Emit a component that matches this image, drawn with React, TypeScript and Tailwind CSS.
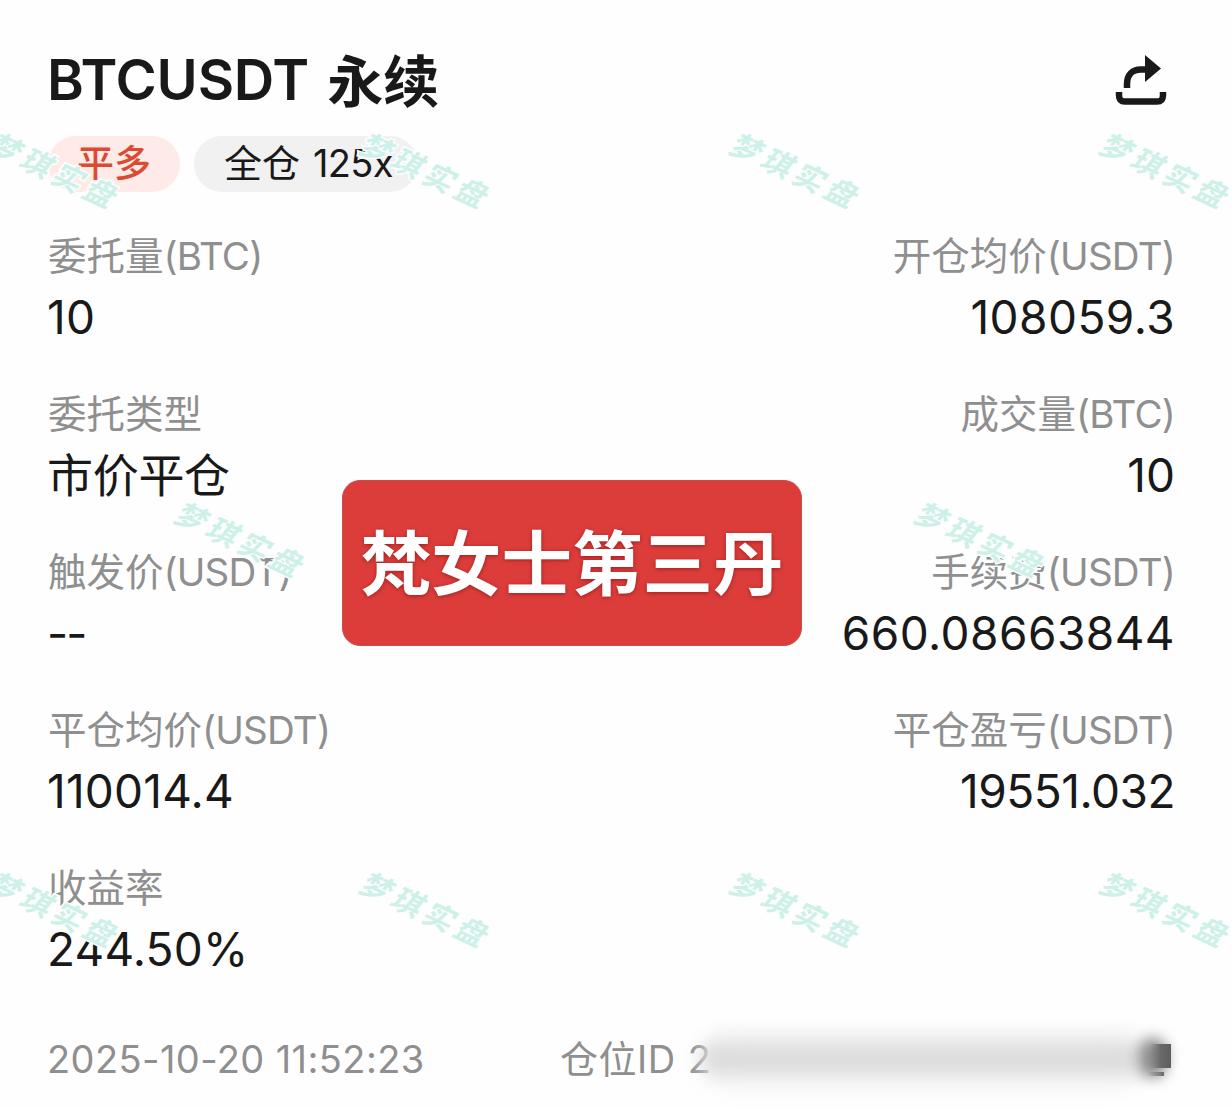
type Field = {
  label: string;
  unit?: string;
  value: string;
  tracking: string;
};

const rows: Field[][] = [
  [
    { label: '委托量', unit: '(BTC)', value: '10', tracking: 'tracking-[0.300px]' },
    { label: '开仓均价', unit: '(USDT)', value: '108059.3', tracking: 'tracking-[0.450px]' },
  ],
  [
    { label: '委托类型', value: '市价平仓', tracking: 'tracking-[-0.300px]' },
    { label: '成交量', unit: '(BTC)', value: '10', tracking: 'tracking-[0px]' },
  ],
  [
    { label: '触发价', unit: '(USDT)', value: '--', tracking: 'tracking-[-2px]' },
    { label: '手续费', unit: '(USDT)', value: '660.08663844', tracking: 'tracking-[0.450px]' },
  ],
  [
    { label: '平仓均价', unit: '(USDT)', value: '110014.4', tracking: 'tracking-[0.200px]' },
    { label: '平仓盈亏', unit: '(USDT)', value: '19551.032', tracking: 'tracking-[-0.500px]' },
  ],
  [{ label: '收益率', value: '244.50%', tracking: 'tracking-[0.200px]' }],
];

const watermarks = [
  'left-[51px] top-[170px]',
  'left-[422px] top-[170px]',
  'left-[792px] top-[170px]',
  'left-[1162px] top-[170px]',
  'left-[237px] top-[539px]',
  'left-[977px] top-[539px]',
  'left-[51px] top-[909px]',
  'left-[422px] top-[909px]',
  'left-[792px] top-[909px]',
  'left-[1162px] top-[909px]',
];

function ShareIcon() {
  return (
    <svg className="mt-[15px] h-[52px] w-[52px]" viewBox="0 0 52 52" fill="none">
      <path d="M12 33v-4c0-9 5-14.500 14-14.500h6" stroke="#191919" strokeWidth="6.500" />
      <path d="M30 0l16 13.500-16 13.500z" fill="#191919" />
      <path d="M4 37v3c0 4.500 2 6.500 6 6.500h32c4 0 6-2 6-6.500v-3" stroke="#191919" strokeWidth="6.500" />
    </svg>
  );
}

function FieldCell({ field, right }: { field: Field; right: boolean }) {
  return (
    <div className={right ? 'text-right' : 'pl-px text-left'}>
      <div className="h-[60px] text-[38.500px] leading-[61px] text-[#8f8f8f]">
        {field.label}
        {field.unit && <span className="tracking-[-0.800px]">{field.unit}</span>}
      </div>
      <div className={`-ml-px h-[62px] text-[46px] leading-[62px] text-[#191919] ${field.tracking}`}>{field.value}</div>
    </div>
  );
}

export default function App() {
  return (
    <div className="relative h-[1108px] w-[1232px] overflow-hidden whitespace-nowrap bg-[#fefefe] font-[Inter,'Noto_Sans_CJK_SC',sans-serif]">
      <div className="flex h-full flex-col pl-[47px] pr-[57px] pt-10">
        <header className="flex h-20 justify-between">
          <h1 className="flex text-[56px] font-semibold leading-[80px] text-[#191919]">
            <span className="tracking-[-0.200px]">BTCUSDT</span>
            <span className="ml-[18px] pt-0.5 leading-[80px]">永续</span>
          </h1>
          <div className="mr-2">
            <ShareIcon />
          </div>
        </header>

        <div className="mt-4 flex gap-[14px] pl-px">
          <span className="h-14 w-[132px] rounded-full bg-[#feebe7] pl-[29px] text-[37px] font-medium leading-[56px] text-[#dc4a33]">平多</span>
          <span className="h-14 w-[224px] rounded-full bg-[#f1f1f1] pl-[30px] text-[38px] leading-[54px] text-[#191919]">
            全仓<span className="ml-[13px] tracking-[-0.700px]">125x</span>
          </span>
        </div>

        <main className="mt-[34px] flex flex-col gap-9">
          {rows.map((row) => (
            <div key={row[0].label} className="flex justify-between">
              {row.map((field, i) => (
                <FieldCell key={field.label} field={field} right={i === 1} />
              ))}
            </div>
          ))}
        </main>

        <footer className="mt-[49px] flex h-[60px] text-[38px] leading-[61px] text-[#8f8f8f]">
          <span className="w-[513px] tracking-[0.400px]">2025-10-20 11:52:23</span>
          <span className="tracking-[0.500px]">仓位ID</span>
          <span className="ml-3">2</span>
        </footer>
      </div>

      {/* masked position id and copy button */}
      <div className="absolute left-[700px] top-[1032px] h-[54px] w-[445px] rounded-full bg-gradient-to-b from-[#f4f4f4] via-[#d6d6d6] to-[#f6f6f6] blur-[9px]" />
      <div className="absolute left-[1139px] top-[1038px] h-[40px] w-[28px] rounded-full bg-[#8a8a8a] blur-[7px]" />
      <div className="absolute left-[1150px] top-[1044px] h-6 w-[21px] bg-gradient-to-r from-transparent via-[#6a6a6a] to-[#5e5e5e]" />
      <div className="absolute left-[1148px] top-[1072px] h-1 w-4 bg-gradient-to-r from-transparent to-[#666666]" />

      {watermarks.map((place) => (
        <div
          key={place}
          className={`absolute ${place} -translate-x-1/2 -translate-y-1/2 rotate-[25deg] pl-[5px] text-[30px] font-bold italic leading-none tracking-[5px] text-[#cdf1e8] [-webkit-text-stroke:3px_#fefefe] [paint-order:stroke]`}
        >
          梦琪实盘
        </div>
      ))}

      <div className="absolute left-[342px] top-[480px] flex h-[166px] w-[460px] items-center justify-center rounded-[18px] border border-[#c94e4b] bg-[#dd3d3a] pt-[4px] text-[70.500px] font-bold leading-none text-white [text-shadow:0_1px_4px_rgba(90,0,0,0.5)]">
        梵女士第三丹
      </div>
    </div>
  );
}
